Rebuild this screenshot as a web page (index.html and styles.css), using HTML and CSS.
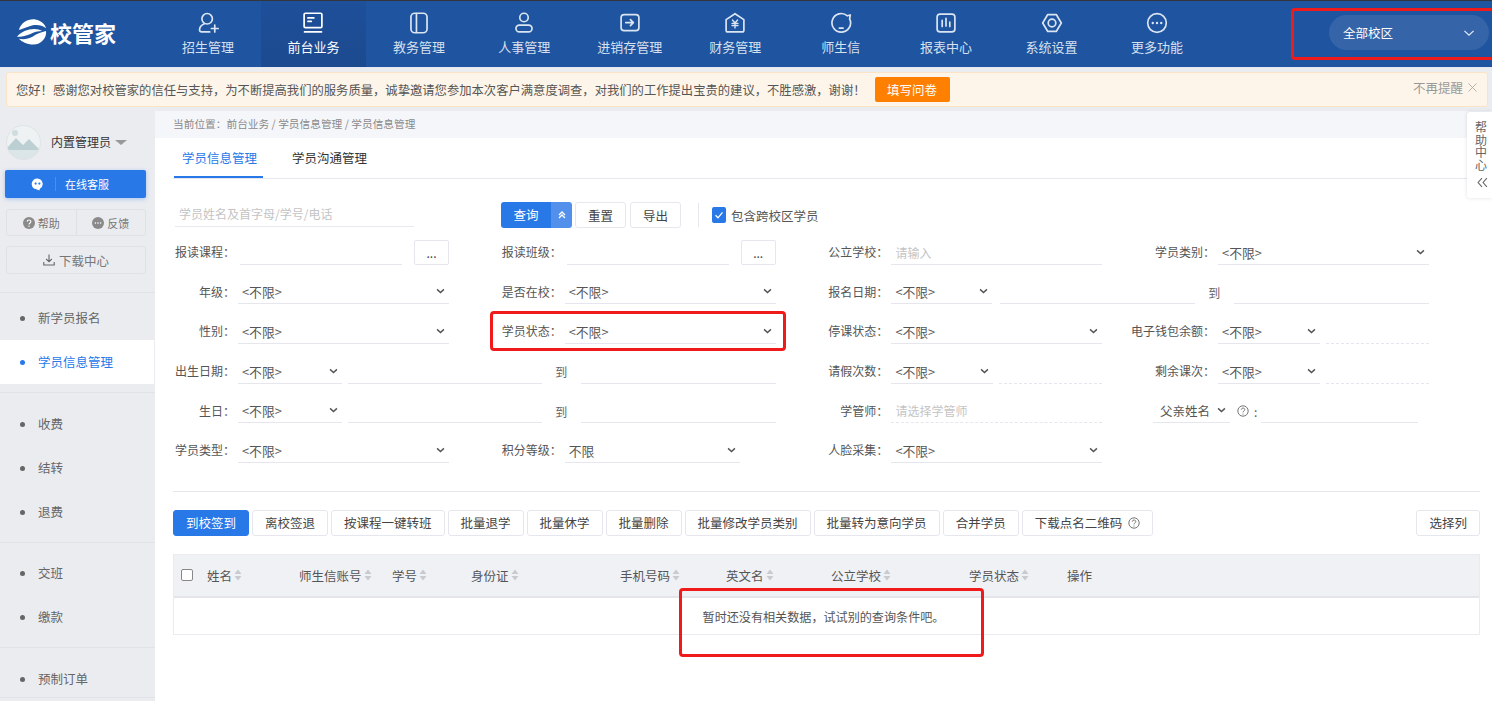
FILE: index.html
```html
<!DOCTYPE html>
<html lang="zh-CN">
<head>
<meta charset="utf-8">
<title>校管家 - 学员信息管理</title>
<link rel="stylesheet" href="styles.css">
</head>
<body>
<svg class="defs" width="0" height="0" aria-hidden="true">
  <symbol id="chev" viewBox="0 0 10 6"><path d="M1.2 1.2 5 4.8l3.8-3.6" fill="none" stroke="currentColor"/></symbol>
  <symbol id="sort" viewBox="0 0 8 12"><path d="M4 0.5 7.5 5H.5zM4 11.5.5 7h7z" fill="#c8cacf"/></symbol>
  <symbol id="qmark" viewBox="0 0 12 12"><circle cx="6" cy="6" r="5.2" fill="none" stroke="#666" stroke-width=".9"/><path d="M4.3 4.7c0-2.2 3.5-2.2 3.5-.1 0 1.300-1.800 1.300-1.800 2.800" fill="none" stroke="#666" stroke-width=".9"/><circle cx="6" cy="9" r=".6" fill="#666"/></symbol>
</svg>

<header class="topbar">
  <div class="logo">
    <svg class="logo-mark" viewBox="0 0 32 28" aria-hidden="true">
      <path d="M3 12C5 4 13 0 20 1c6 1 10 5 11 9-5-4-12-4-17-2-4 1-8 3-11 4z" fill="#fff"/>
      <path d="M1 19c4-5 11-8 18-8 3 0 6 1 8 2-4 0-9 1-12 3-5 2-10 3-14 3z" fill="#fff"/>
      <path d="M31 13c1 7-5 14-13 14-7 0-12-3-15-6 5 1 10 0 14-2 4-3 9-5 14-6z" fill="#fff"/>
    </svg>
    <span class="logo-text">校管家</span>
  </div>
  <nav class="nav">
    <a class="nav-item"><svg class="nav-icon" viewBox="0 0 26 26"><circle cx="12" cy="8" r="6.2"/><path d="M8.500 14c-3 1.500-5.500 4-5.500 7 0 2 1 2.500 2.500 2.500H15M17 19.500h8M21 15.500v8"/></svg><span>招生管理</span></a>
    <a class="nav-item active"><svg class="nav-icon" viewBox="0 0 26 26"><rect x="2.500" y="1.500" width="21" height="17" rx="1.500"/><path d="M7 7h7M7 11h4M3 23.500h20" /></svg><span>前台业务</span></a>
    <a class="nav-item"><svg class="nav-icon" viewBox="0 0 26 26"><rect x="3.500" y="1.500" width="19" height="23" rx="4.500"/><path d="M10 2v22"/></svg><span>教务管理</span></a>
    <a class="nav-item"><svg class="nav-icon" viewBox="0 0 26 26"><circle cx="13" cy="6.500" r="5"/><rect x="3.500" y="15.500" width="19" height="8" rx="4"/></svg><span>人事管理</span></a>
    <a class="nav-item"><svg class="nav-icon" viewBox="0 0 26 26"><rect x="2.500" y="3" width="21" height="19" rx="3.500"/><path d="M8 12.500h9M13.500 9l3.500 3.500-3.500 3.500"/></svg><span>进销存管理</span></a>
    <a class="nav-item"><svg class="nav-icon" viewBox="0 0 26 26"><path d="M13 2 23.500 9v12.500a2 2 0 0 1-2 2h-17a2 2 0 0 1-2-2V9z"/><path class="thin" d="M10 9.500l3 3.500 3-3.500M9.500 13.500h7M9.500 16h7M13 13v6"/></svg><span>财务管理</span></a>
    <a class="nav-item"><svg class="nav-icon" viewBox="0 0 26 26"><path d="M20.500 4.500l3.500-1-.8 4.500A11 11 0 1 1 20.500 4.500z"/><path d="M11 19h4.500"/></svg><span>师生信</span></a>
    <a class="nav-item"><svg class="nav-icon" viewBox="0 0 26 26"><rect x="2.500" y="2.500" width="21" height="21" rx="3.500"/><path d="M8.500 10v7M13 7.500v9M17.500 12v5"/></svg><span>报表中心</span></a>
    <a class="nav-item"><svg class="nav-icon" viewBox="0 0 26 26"><path d="M8 3h10l6 10-6 10H8L2 13z"/><circle cx="13" cy="13" r="4.500"/></svg><span>系统设置</span></a>
    <a class="nav-item"><svg class="nav-icon" viewBox="0 0 26 26"><circle cx="13" cy="13" r="11"/><path class="dots" d="M8 13h.01M13 13h.01M18 13h.01"/></svg><span>更多功能</span></a>
  </nav>
  <div class="campus">
    <div class="campus-pill"><span>全部校区</span><svg class="campus-chev"><use href="#chev"/></svg></div>
  </div>
</header>

<section class="notice">
  <span class="notice-text">您好&#xFF01;感谢您对校管家的信任与支持&#xFF0C;为不断提高我们的服务质量&#xFF0C;诚挚邀请您参加本次客户满意度调查&#xFF0C;对我们的工作提出宝贵的建议&#xFF0C;不胜感激&#xFF0C;谢谢&#xFF01;</span>
  <button class="notice-btn">填写问卷</button>
  <span class="notice-close">不再提醒<svg class="close-x" viewBox="0 0 10 10"><path d="M.5.5l9 9M9.500.5l-9 9"/></svg></span>
</section>

<div class="main">
  <aside class="sidebar">
    <div class="user">
      <svg class="avatar" viewBox="0 0 35 35" aria-hidden="true">
        <defs><clipPath id="av"><circle cx="17.500" cy="17.500" r="17"/></clipPath></defs>
        <g clip-path="url(#av)">
          <rect width="35" height="35" fill="#eef2f3"/>
          <circle cx="9" cy="8" r="3" fill="#cfdcdf"/>
          <path d="M0 24 10 13l7 7 6-6 12 12v9H0z" fill="#bcd0d4"/>
          <rect y="25" width="35" height="10" fill="#dbe6e8"/>
        </g>
        <circle cx="17.500" cy="17.500" r="17" fill="none" stroke="#dfe3e5"/>
      </svg>
      <span class="user-name">内置管理员</span><span class="caret"></span>
    </div>
    <button class="service">
      <svg class="service-icon" viewBox="0 0 14 14"><path d="M7 .5a6 6 0 0 0-3.500 11l1 .2L9 13.500l.5-1.800A6 6 0 0 0 7 .5z" fill="#fff"/><circle cx="5" cy="6" r="1.200" fill="#2878e8"/><circle cx="9" cy="6" r="1.200" fill="#2878e8"/></svg>
      <span class="service-sep"></span>
      <span>在线客服</span>
    </button>
    <div class="help-group">
      <a class="help-btn"><svg class="help-icon" viewBox="0 0 12 12"><circle cx="6" cy="6" r="6" fill="#8a8a8a"/><path d="M4.200 4.700c0-2.300 3.700-2.300 3.700-.1 0 1.400-1.900 1.300-1.900 2.900" fill="none" stroke="#fff" stroke-width="1.100"/><circle cx="6" cy="9.300" r=".7" fill="#fff"/></svg>帮助</a>
      <a class="help-btn"><svg class="help-icon" viewBox="0 0 12 12"><circle cx="6" cy="6" r="6" fill="#8a8a8a"/><circle cx="3.400" cy="6" r=".8" fill="#fff"/><circle cx="6" cy="6" r=".8" fill="#fff"/><circle cx="8.600" cy="6" r=".8" fill="#fff"/></svg>反馈</a>
    </div>
    <a class="download"><svg class="dl-icon" viewBox="0 0 12 12"><path d="M6 .5v7M3.200 5 6 7.800 8.800 5M.8 8v3h10.400V8" fill="none" stroke="#666" stroke-width="1.100"/></svg>下载中心</a>
    <ul class="menu-group first">
      <li class="menu-item">新学员报名</li>
      <li class="menu-item active">学员信息管理</li>
    </ul>
    <ul class="menu-group">
      <li class="menu-item">收费</li>
      <li class="menu-item">结转</li>
      <li class="menu-item">退费</li>
    </ul>
    <ul class="menu-group third">
      <li class="menu-item">交班</li>
      <li class="menu-item">缴款</li>
    </ul>
    <ul class="menu-group last">
      <li class="menu-item">预制订单</li>
    </ul>
  </aside>

  <main class="content">
    <div class="crumb">当前位置&#xFF1A;前台业务 / 学员信息管理 / 学员信息管理</div>
    <div class="pane">
      <div class="tabs">
        <a class="tab active">学员信息管理</a>
        <a class="tab">学员沟通管理</a>
      </div>

      <div class="search-row">
        <div class="search-input">学员姓名及首字母/学号/电话</div>
        <div class="query-btn"><span class="query-main">查询</span><span class="query-arrow"><svg viewBox="0 0 8 8"><path d="M1 4l3-3 3 3M1 7l3-3 3 3" fill="none" stroke="#fff" stroke-width="1.300"/></svg></span></div>
        <button class="btn">重置</button>
        <button class="btn">导出</button>
        <span class="vsep"></span>
        <span class="check on"><svg viewBox="0 0 14 14"><path d="M3.500 7.200 6 9.800l4.500-5.500" fill="none" stroke="#fff" stroke-width="1.300"/></svg></span>
        <span class="check-label">包含跨校区学员</span>
      </div>

      <div class="filters">
        <div class="field"><label class="lbl"><span>报读课程&#xFF1A;</span></label><div class="ctl"><div class="inp grow nudge"></div><button class="dots-btn">...</button></div></div>
        <div class="field"><label class="lbl"><span>报读班级&#xFF1A;</span></label><div class="ctl"><div class="inp grow nudge"></div><button class="dots-btn">...</button></div></div>
        <div class="field"><label class="lbl"><span>公立学校&#xFF1A;</span></label><div class="ctl"><div class="inp grow ph">请输入</div></div></div>
        <div class="field"><label class="lbl"><span>学员类别&#xFF1A;</span></label><div class="ctl"><div class="sel grow">&lt;不限&gt;<svg class="chev"><use href="#chev"/></svg></div></div></div>

        <div class="field"><label class="lbl"><span>年级&#xFF1A;</span></label><div class="ctl"><div class="sel grow">&lt;不限&gt;<svg class="chev"><use href="#chev"/></svg></div></div></div>
        <div class="field"><label class="lbl"><span>是否在校&#xFF1A;</span></label><div class="ctl"><div class="sel grow">&lt;不限&gt;<svg class="chev"><use href="#chev"/></svg></div></div></div>
        <div class="field span2"><label class="lbl"><span>报名日期&#xFF1A;</span></label><div class="ctl"><div class="sel w101">&lt;不限&gt;<svg class="chev"><use href="#chev"/></svg></div><div class="inp grow gap8"></div><span class="to">到</span><div class="inp grow"></div></div></div>

        <div class="field"><label class="lbl"><span>性别&#xFF1A;</span></label><div class="ctl"><div class="sel grow">&lt;不限&gt;<svg class="chev"><use href="#chev"/></svg></div></div></div>
        <div class="field"><label class="lbl"><span>学员状态&#xFF1A;</span></label><div class="ctl"><div class="sel grow">&lt;不限&gt;<svg class="chev"><use href="#chev"/></svg></div></div></div>
        <div class="field"><label class="lbl"><span>停课状态&#xFF1A;</span></label><div class="ctl"><div class="sel grow">&lt;不限&gt;<svg class="chev"><use href="#chev"/></svg></div></div></div>
        <div class="field"><label class="lbl"><span>电子钱包余额&#xFF1A;</span></label><div class="ctl"><div class="sel w102">&lt;不限&gt;<svg class="chev"><use href="#chev"/></svg></div><div class="inp grow dashed gap6"></div></div></div>

        <div class="field span2"><label class="lbl"><span>出生日期&#xFF1A;</span></label><div class="ctl"><div class="sel w104">&lt;不限&gt;<svg class="chev"><use href="#chev"/></svg></div><div class="inp grow gap6"></div><span class="to">到</span><div class="inp grow"></div></div></div>
        <div class="field"><label class="lbl"><span>请假次数&#xFF1A;</span></label><div class="ctl"><div class="sel w102">&lt;不限&gt;<svg class="chev"><use href="#chev"/></svg></div><div class="inp grow dashed gap6"></div></div></div>
        <div class="field"><label class="lbl"><span>剩余课次&#xFF1A;</span></label><div class="ctl"><div class="sel w102">&lt;不限&gt;<svg class="chev"><use href="#chev"/></svg></div><div class="inp grow dashed gap6"></div></div></div>

        <div class="field span2"><label class="lbl"><span>生日&#xFF1A;</span></label><div class="ctl"><div class="sel w104">&lt;不限&gt;<svg class="chev"><use href="#chev"/></svg></div><div class="inp grow gap6"></div><span class="to">到</span><div class="inp grow"></div></div></div>
        <div class="field"><label class="lbl"><span>学管师&#xFF1A;</span></label><div class="ctl"><div class="inp grow dashed ph">请选择学管师</div></div></div>
        <div class="field father">
          <div class="sel father-sel">父亲姓名<svg class="chev"><use href="#chev"/></svg></div>
          <svg class="q"><use href="#qmark"/></svg><span class="colon">:</span>
          <div class="inp father-inp"></div>
        </div>

        <div class="field"><label class="lbl"><span>学员类型&#xFF1A;</span></label><div class="ctl"><div class="sel grow">&lt;不限&gt;<svg class="chev"><use href="#chev"/></svg></div></div></div>
        <div class="field"><label class="lbl"><span>积分等级&#xFF1A;</span></label><div class="ctl"><div class="sel w175">不限<svg class="chev"><use href="#chev"/></svg></div></div></div>
        <div class="field"><label class="lbl"><span>人脸采集&#xFF1A;</span></label><div class="ctl"><div class="sel grow">&lt;不限&gt;<svg class="chev"><use href="#chev"/></svg></div></div></div>
      </div>

      <div class="rule"></div>

      <div class="toolbar">
        <button class="btn primary">到校签到</button>
        <button class="btn">离校签退</button>
        <button class="btn">按课程一键转班</button>
        <button class="btn">批量退学</button>
        <button class="btn">批量休学</button>
        <button class="btn">批量删除</button>
        <button class="btn">批量修改学员类别</button>
        <button class="btn">批量转为意向学员</button>
        <button class="btn">合并学员</button>
        <button class="btn">下载点名二维码<svg class="q btn-q"><use href="#qmark"/></svg></button>
        <button class="btn pick">选择列</button>
      </div>

      <div class="table">
        <div class="thead">
          <span class="th c0"><span class="box"></span></span>
          <span class="th c1">姓名<svg class="sort"><use href="#sort"/></svg></span>
          <span class="th c2">师生信账号<svg class="sort"><use href="#sort"/></svg></span>
          <span class="th c3">学号<svg class="sort"><use href="#sort"/></svg></span>
          <span class="th c4">身份证<svg class="sort"><use href="#sort"/></svg></span>
          <span class="th c5">手机号码<svg class="sort"><use href="#sort"/></svg></span>
          <span class="th c6">英文名<svg class="sort"><use href="#sort"/></svg></span>
          <span class="th c7">公立学校<svg class="sort"><use href="#sort"/></svg></span>
          <span class="th c8">学员状态<svg class="sort"><use href="#sort"/></svg></span>
          <span class="th">操作</span>
        </div>
        <div class="empty">暂时还没有相关数据&#xFF0C;试试别的查询条件吧&#x3002;</div>
      </div>
    </div>
  </main>
</div>

<aside class="help-tab"><span class="help-text">帮助中心</span><svg viewBox="0 0 10 10"><path d="M4.500 1 1 5l3.500 4M9 1 5.500 5 9 9" fill="none" stroke="#666" stroke-width="1"/></svg></aside>

<div class="mark mark-campus"></div>
<div class="mark mark-status"></div>
<div class="mark mark-empty"></div>
</body>
</html>
```

FILE: styles.css
```css
* { box-sizing: border-box; }
html, body { margin: 0; padding: 0; height: 100%; }
body {
  width: 1492px;
  height: 701px;
  overflow: hidden;
  position: relative;
  background: #ebecf0;
  color: #555;
  font-family: "Noto Sans CJK SC", "Noto Sans", "Liberation Sans", sans-serif;
  font-size: 12px;
  display: flex;
  flex-direction: column;
}
button { font-family: inherit; cursor: pointer; }
ul { list-style: none; margin: 0; padding: 0; }
.defs { position: absolute; }

/* top bar */
.topbar {
  flex: none;
  height: 68px;
  display: flex;
  background: #1e54a0;
  border-top: 1px solid #33363c;
  border-bottom: 1px solid #e6e9ef;
}
.logo { width: 155.300px; flex: none; display: flex; align-items: center; padding: 0 0 5px 16px; color: #fff; }
.logo-mark { width: 31px; height: 28px; flex: none; }
.logo-text { font-size: 22px; font-weight: 700; margin-left: 3px; line-height: 1; }
.nav { display: flex; }
.nav-item {
  width: 105.450px;
  display: flex;
  flex-direction: column;
  align-items: center;
  padding-top: 11px;
  color: #d6e0ef;
  font-size: 13px;
  line-height: 18px;
}
.nav-item.active { background: linear-gradient(#1e4f99, #1c4a8f); color: #fff; }
.nav-icon {
  width: 22px;
  height: 22px;
  margin-bottom: 4px;
  fill: none;
  stroke: #dbe5f2;
  stroke-width: 2;
  stroke-linecap: round;
  stroke-linejoin: round;
}
.nav-item.active .nav-icon { stroke: #fff; }
.nav-icon .thin { stroke-width: 1.600; }
.nav-icon .dots { stroke-width: 2.800; }
.campus { flex: 1; display: flex; align-items: flex-start; justify-content: flex-end; padding: 14px 3px 0 0; }
.campus-pill {
  width: 160px;
  height: 35px;
  border-radius: 18px;
  background: #3564a8;
  color: #fff;
  font-size: 12.500px;
  display: flex;
  align-items: center;
  justify-content: space-between;
  padding: 0 14px;
}
.campus-chev { width: 12px; height: 8px; color: #e6edf6; stroke-width: 1; }

/* notice */
.notice {
  flex: none;
  height: 35px;
  margin: 4px 4px 4px 6px;
  display: flex;
  align-items: center;
  padding: 0 10px 0 9px;
  background: #fef5ea;
  border: 1px solid #fbe3c8;
  border-radius: 3px;
  color: #555;
  font-size: 12.320px;
}
.notice-text { white-space: nowrap; }
.notice-btn {
  width: 75px;
  height: 25px;
  margin-left: 9px;
  border: 0;
  border-radius: 2px;
  background: #ff8000;
  color: #fff;
  font-size: 12.500px;
}
.notice-close { margin-left: auto; color: #999; display: flex; align-items: center; font-size: 12.500px; margin-top: -4px; }
.close-x { width: 9px; height: 9px; margin-left: 5px; fill: none; stroke: #aaa; stroke-width: 1; }

/* layout */
.main { flex: 1; min-height: 0; display: flex; }
.sidebar { width: 155px; flex: none; background: #ebecf0; overflow: hidden; }
.content { flex: 1; min-width: 0; background: #fff; }

/* sidebar */
.user { display: flex; align-items: center; padding: 14px 0 0 6px; }
.avatar { width: 35px; height: 35px; flex: none; }
.user-name { margin: -3px 0 0 10px; color: #333; font-size: 12px; }
.caret { margin-left: 4px; border-top: 5px solid #999; border-left: 6px solid transparent; border-right: 6px solid transparent; }
.service {
  width: 141px;
  height: 28px;
  margin: 10px 0 0 5px;
  display: flex;
  align-items: center;
  padding: 0 0 0 26px;
  border: 0;
  border-radius: 2px;
  background: #2878e8;
  color: #fff;
  font-size: 11px;
  box-shadow: 0 1px 4px rgba(40, 120, 232, .35);
}
.service-icon { width: 13px; height: 13px; flex: none; }
.service-sep { width: 1px; height: 14px; margin: 0 9px 0 11px; background: #4a8ef0; }
.help-group {
  width: 140px;
  height: 27px;
  margin: 11px 0 0 6px;
  display: flex;
  border: 1px solid #e0e1e6;
  border-radius: 3px;
}
.help-btn {
  flex: 1;
  display: flex;
  align-items: center;
  justify-content: center;
  color: #777;
  font-size: 11px;
}
.help-btn + .help-btn { border-left: 1px solid #e0e1e6; }
.help-icon { width: 12px; height: 12px; margin-right: 3px; }
.download {
  width: 140px;
  height: 28px;
  margin: 10px 0 0 6px;
  display: flex;
  align-items: center;
  justify-content: center;
  border: 1px solid #e0e1e6;
  border-radius: 3px;
  color: #777;
  font-size: 12.500px;
}
.dl-icon { width: 12px; height: 12px; margin-right: 4px; }
.menu-group { padding: 9px 0 8px; border-bottom: 1px solid #e2e3e8; }
.menu-group.first { margin-top: 18px; padding-top: 3px; border-top: 1px solid #e2e3e8; }
.menu-group.third { padding-top: 8px; }
.menu-group.last { padding-bottom: 0; }
.menu-group.last .menu-item { height: 40px; }
.menu-item {
  position: relative;
  height: 44px;
  line-height: 44px;
  padding-left: 38px;
  color: #666;
  font-size: 12.500px;
}
.menu-item::before {
  content: "";
  position: absolute;
  left: 20px;
  top: 20px;
  width: 5px;
  height: 5px;
  border-radius: 50%;
  background: #666;
}
.menu-item.active { background: #fff; color: #2878e8; margin-right: 1px; }
.menu-item.active::before { background: #2878e8; }

/* content */
.crumb { height: 27px; line-height: 25px; padding-left: 18px; background: #f5f6fa; color: #8a8a8a; font-size: 10.700px; }
.pane { padding: 0 12px 0 18px; }
.tabs { height: 41px; display: flex; border-bottom: 1px solid #e6e7ee; }
.tab { height: 40px; line-height: 40px; padding: 0 6px 0 8px; margin-right: 21px; color: #333; font-size: 12.500px; }
.tab.active { color: #2878e8; border-bottom: 2px solid #2878e8; margin-left: 1px; }

.search-row { display: flex; align-items: center; height: 26px; margin-top: 23px; }
.search-input {
  width: 239px;
  height: 24px;
  line-height: 22px;
  margin: 0 87px 0 2px;
  padding-left: 4px;
  border-bottom: 1px solid #e8e9f0;
  color: #c4c4c4;
  font-size: 12px;
}
.query-btn { display: flex; width: 71px; height: 26px; border-radius: 3px; overflow: hidden; color: #fff; font-size: 12.500px; }
.query-main { flex: 1; background: #2878e8; text-align: center; line-height: 26px; }
.query-arrow { width: 21px; background: #5290ec; display: flex; align-items: center; justify-content: center; }
.query-arrow svg { width: 8px; height: 8px; }
.btn {
  height: 26px;
  padding: 0 12px;
  border: 1px solid #e6e7ee;
  border-radius: 3px;
  background: #fff;
  color: #444;
  font-size: 12.500px;
  white-space: nowrap;
  display: inline-flex;
  align-items: center;
  justify-content: center;
}
.search-row .btn { width: 51px; padding: 0; margin-left: 3px; }
.search-row .btn + .btn { margin-left: 4px; }
.btn.primary { background: #2878e8; border-color: #2878e8; color: #fff; }
.vsep { width: 1px; height: 24px; margin: 0 13px 0 17px; background: #e6e7ee; }
.check { width: 14px; height: 16px; border-radius: 2px; background: #2878e8; }
.check svg { display: block; width: 14px; height: 16px; }
.check-label { margin-left: 5px; color: #555; font-size: 12.500px; }

.filters {
  margin-top: 5px;
  display: grid;
  grid-template-columns: repeat(4, 326.700px);
  grid-auto-rows: 39.600px;
}
.field { display: flex; align-items: center; min-width: 0; }
.span2 { grid-column: span 2; }
.lbl { width: 62px; flex: none; display: flex; justify-content: flex-end; white-space: nowrap; color: #555; font-size: 12px; margin-top: -2px; }
.lbl span { flex: none; }
.ctl { width: 211px; margin-left: 3px; display: flex; align-items: center; }
.span2 .ctl { width: 537.700px; }
.inp, .sel {
  position: relative;
  height: 24px;
  line-height: 23px;
  padding-left: 4px;
  border-bottom: 1px solid #e6e7ee;
  color: #555;
  font-size: 12.800px;
  white-space: nowrap;
}
.grow { flex: 1 1 0; min-width: 0; }
.nudge { margin-left: 2px; }
.w101 { flex: none; width: 101px; }
.w102 { flex: none; width: 102px; }
.w104 { flex: none; width: 104px; }
.w175 { flex: none; width: 175px; }
.gap6 { margin-left: 6px; }
.gap8 { margin-left: 8px; }
.ph { color: #c4c4c4; font-size: 12px; }
.dashed { border-bottom-style: dashed; }
.chev { position: absolute; right: 4px; top: 8px; width: 9px; height: 6px; color: #555; stroke-width: 1.600; }
.to { flex: none; width: 12px; margin: 0 14px 0 13px; color: #666; }
.dots-btn {
  flex: none;
  width: 35px;
  height: 25px;
  margin-left: 12px;
  padding: 0;
  border: 1px solid #e6e7ee;
  border-radius: 2px;
  background: #fff;
  color: #444;
  font-size: 12px;
}
.father-sel { width: 77px; flex: none; padding-left: 7px; font-size: 12.500px; }
.q { width: 12px; height: 12px; flex: none; }
.father .q { margin-left: 7px; }
.colon { margin: 0 2px 0 5px; color: #555; }
.father-inp { width: 157px; flex: none; margin-left: 2px; }

.rule { height: 1px; margin-top: 20px; background: #e6e7ee; }
.toolbar { display: flex; gap: 3px; margin-top: 18px; }
.btn-q { margin-left: 6px; }
.btn.pick { margin-left: auto; }

.table { margin-top: 18px; border: 1px solid #eaebf0; }
.thead {
  height: 43px;
  display: flex;
  align-items: center;
  background: #f0f1f5;
  border-bottom: 2px solid #e4e5ea;
  color: #555;
  font-size: 12.500px;
}
.th { display: flex; align-items: center; flex: none; white-space: nowrap; }
.c0 { width: 33px; padding-left: 7px; }
.c1 { width: 92px; }
.c2 { width: 93px; }
.c3 { width: 79px; }
.c4 { width: 149px; }
.c5 { width: 106px; }
.c6 { width: 105px; }
.c7 { width: 138px; }
.c8 { width: 98px; }
.box { width: 12px; height: 12px; border: 1px solid #888; border-radius: 2px; background: #fff; }
.sort { width: 8px; height: 12px; margin-left: 2px; }
.empty { height: 36px; line-height: 38px; padding-right: 6px; text-align: center; color: #555; font-size: 12.100px; }

/* overlays */
.help-tab {
  position: absolute;
  right: 0;
  top: 112px;
  width: 25px;
  height: 86px;
  padding: 9px 0 0 3px;
  display: flex;
  flex-direction: column;
  align-items: center;
  background: #fff;
  border-radius: 3px 0 0 3px;
  box-shadow: 0 0 4px rgba(0, 0, 0, .12);
  color: #666;
  font-size: 12px;
  line-height: 12.500px;
}
.help-text { width: 12px; word-break: break-all; }
.help-tab svg { width: 11px; height: 11px; margin: 6px 0 0 3px; }
.mark { position: absolute; border: 3px solid #f01a1a; border-radius: 4px; pointer-events: none; }
.mark-campus { left: 1291px; top: 8px; width: 210px; height: 52px; }
.mark-status { left: 490px; top: 311px; width: 296px; height: 40px; }
.mark-empty { left: 679px; top: 588px; width: 305px; height: 69px; }
```
